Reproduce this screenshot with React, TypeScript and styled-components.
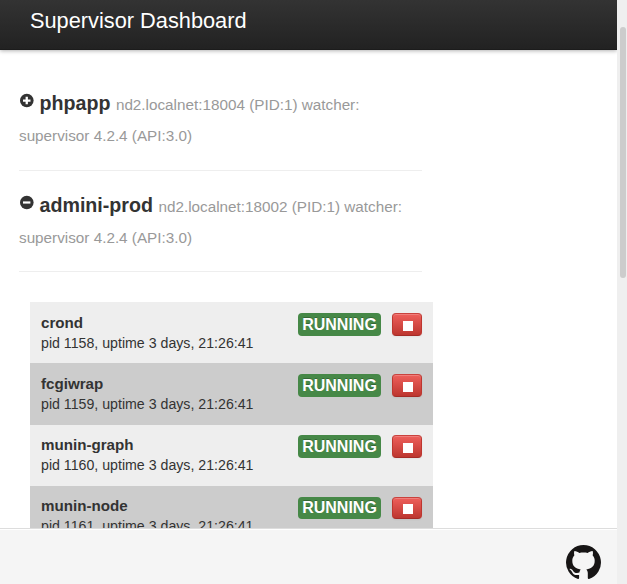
import React from "react";
import styled, { createGlobalStyle } from "styled-components";

const GlobalStyle = createGlobalStyle`
  * { box-sizing: border-box; }
  body {
    margin: 0;
    overflow: hidden;
    background: #fff;
    color: #333;
    font-family: "Liberation Sans", Arial, sans-serif;
    font-size: 14.18px;
    line-height: 20px;
  }
`;

const Window = styled.div`
  display: grid;
  grid-template-columns: 617px 10px;
  height: 584px;
  overflow: hidden;
`;

const Page = styled.div`
  display: flex;
  flex-direction: column;
  height: 584px;
  min-width: 0;
`;

const NavBar = styled.header`
  flex: none;
  height: 50px;
  padding: 8px 30px 0;
  background: linear-gradient(#333, #222);
  border-bottom: 1px solid #1c1c1c;
  box-shadow: 0 1px 4px rgba(0, 0, 0, 0.3);
  color: #fff;
  font-size: 21.78px;
  line-height: 25px;
`;

const Content = styled.main`
  flex: 1;
  min-height: 0;
  overflow: hidden;
  padding: 38px 0 0 19px;
`;

const Server = styled.section`
  width: 403px;
  height: 101px;
  border-bottom: 1px solid #eee;

  &:first-child {
    height: 83px;
  }
  &:nth-child(2) {
    padding-top: 19px;
  }
`;

const ServerTitle = styled.h3`
  margin: 0;
  font-size: 19.65px;
  line-height: 31px;
  white-space: nowrap;

  svg {
    display: inline-block;
    width: 15px;
    height: 15px;
    margin-right: 5.5px;
    vertical-align: 2.5px;
  }
`;

const Meta = styled.small`
  color: #999;
  font-size: 15.27px;
  font-weight: normal;
  line-height: 1;
`;

const ProcessList = styled.div`
  width: 403px;
  margin: 30.2px 0 0 11px;
`;

const ProcessRow = styled.article<{ $dark: boolean }>`
  display: flex;
  align-items: flex-start;
  height: 61.2px;
  padding: 10.8px 11px 0;
  background: ${(p) => (p.$dark ? "#ccc" : "#eee")};
`;

const ProcessInfo = styled.div`
  flex: 1;
  margin-top: -0.3px;
  white-space: nowrap;
`;

const Name = styled.div`
  font-size: 15.15px;
  font-weight: bold;
`;

const Status = styled.span`
  width: 83px;
  height: 22.7px;
  padding-top: 0.65px;
  border-radius: 4px;
  background: #468847;
  color: #fff;
  font-size: 16px;
  font-weight: bold;
  line-height: 22.7px;
  text-align: center;
  text-shadow: 0 -1px 0 rgba(0, 0, 0, 0.25);
`;

const StopButton = styled.button`
  display: flex;
  align-items: center;
  justify-content: center;
  width: 30px;
  height: 22.7px;
  margin-left: 11px;
  padding: 2.4px 0 0 1px;
  border: 1px solid;
  border-color: #c9423d #bd362f #a52b26;
  border-radius: 4px;
  background: linear-gradient(#ee5f5b, #bd362f);
  box-shadow: inset 0 1px 0 rgba(255, 255, 255, 0.2), 0 1px 2px rgba(0, 0, 0, 0.05);
`;

const StopMark = styled.span`
  width: 10px;
  height: 10px;
  background: #fff;
`;

const Footer = styled.footer`
  display: flex;
  flex: none;
  justify-content: flex-end;
  height: 56px;
  padding: 16px 16px 0 0;
  border-top: 1px solid #ddd;
  background: #f5f5f5;
  box-shadow: inset 0 1px 0 #fff;

  svg {
    width: 35px;
    height: 35px;
  }
`;

const ScrollTrack = styled.div`
  padding: 27px 1px 0 3px;
  background: #efefef;
`;

const ScrollThumb = styled.div`
  height: 251px;
  border-radius: 3px;
  background: #ccc;
`;

const ToggleIcon = ({ open }: { open: boolean }) => (
  <svg viewBox="0 0 15 15">
    <circle cx="7.8" cy="7.5" r="6.8" fill="#333" />
    <path d={open ? "M4 6.4h7.4v2.2H4z" : "M6.6 3.8h2.3v2.6h2.6v2.3H8.9v2.6H6.6V8.7H4V6.4h2.6z"} fill="#fff" />
  </svg>
);

const GitHubMark = () => (
  <svg viewBox="0 0 35 35" aria-label="GitHub">
    <path
      fill="#171515"
      d="M17.5 0A17.5 17.5 0 0 0 12 34.1c.7.1 1.1-.3 1.1-1v-3.2c-4.6.8-6.1-.8-7-3-.6-1.2-1.4-1.9-2.3-2.5-.7-.5.3-.7 1-.5 2.5.4 2.4 4.2 6.2 4.1 1 0 1.8-.2 2.4-.5.2-1.3.6-2.3 1.3-3C9.5 23.8 6.3 21.2 6.3 15.8c0-2.3.8-4.1 2.1-5.5-.5-1.3-.5-2.8 0-4.3 2 0 3.7 1.1 4.9 1.9 2.7-.6 5.7-.6 8.4 0 1.2-.8 2.9-1.9 4.9-1.9.5 1.5.5 3 0 4.3 1.3 1.4 2.1 3.2 2.1 5.5 0 5.4-3.2 8-8.4 8.7 1 .9 1.5 2.2 1.5 4v4.6c0 .7.4 1.1 1.2 1A17.5 17.5 0 0 0 17.5 0Z"
    />
  </svg>
);

const servers = [
  { name: "phpapp", port: 18004, open: false },
  { name: "admini-prod", port: 18002, open: true },
];

const processes = [
  { name: "crond", pid: 1158 },
  { name: "fcgiwrap", pid: 1159 },
  { name: "munin-graph", pid: 1160 },
  { name: "munin-node", pid: 1161 },
];

export default function App() {
  return (
    <>
      <GlobalStyle />
      <Window>
        <Page>
          <NavBar>Supervisor Dashboard</NavBar>
          <Content>
            {servers.map((s) => (
              <Server key={s.name}>
                <ServerTitle>
                  <ToggleIcon open={s.open} />
                  {s.name}{" "}
                  <Meta>
                    nd2.localnet:{s.port} (PID:1) watcher:
                    <br />
                    supervisor 4.2.4 (API:3.0)
                  </Meta>
                </ServerTitle>
              </Server>
            ))}
            <ProcessList>
              {processes.map((p, i) => (
                <ProcessRow key={p.name} $dark={i % 2 === 1}>
                  <ProcessInfo>
                    <Name>{p.name}</Name>
                    <div>pid {p.pid}, uptime 3 days, 21:26:41</div>
                  </ProcessInfo>
                  <Status>RUNNING</Status>
                  <StopButton aria-label="Stop">
                    <StopMark />
                  </StopButton>
                </ProcessRow>
              ))}
            </ProcessList>
          </Content>
          <Footer>
            <GitHubMark />
          </Footer>
        </Page>
        <ScrollTrack>
          <ScrollThumb />
        </ScrollTrack>
      </Window>
    </>
  );
}
